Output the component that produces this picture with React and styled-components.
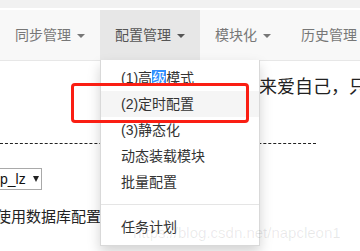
import styled, { createGlobalStyle } from "styled-components";

const GlobalStyle = createGlobalStyle`
  html, body {
    margin: 0;
    padding: 0;
    background: #fff;
    overflow: hidden;
  }
  body {
    font-family: "Liberation Sans", "Noto Sans CJK SC", sans-serif;
    font-size: 14px;
    color: #333;
  }
`;

const Page = styled.div`
  position: relative;
  width: 360px;
  height: 251px;
  overflow: hidden;
  background: #fff;
`;

const TopStrip = styled.div`
  height: 8px;
  background: #f1f1f1;
  border-bottom: 2px solid #fff;
`;

const Navbar = styled.nav`
  position: relative;
  z-index: 2;
  display: flex;
  height: 50px;
  background: #f8f8f8;
  border-bottom: 1px solid #e7e7e7;
`;

const NavItem = styled.div`
  position: relative;
  display: flex;
  align-items: center;
  padding: 0 15px;
  line-height: 20px;
  white-space: nowrap;
  color: ${(p) => (p.$active ? "#555" : "#777")};
  background: ${(p) => (p.$active ? "#e7e7e7" : "transparent")};
`;

const Caret = styled.span`
  display: inline-block;
  width: 0;
  height: 0;
  margin-left: 6px;
  margin-top: 1px;
  border-top: 4px solid;
  border-left: 4px solid transparent;
  border-right: 4px solid transparent;
`;

const Dropdown = styled.ul`
  position: absolute;
  top: 100%;
  left: 0;
  box-sizing: border-box;
  min-width: 160px;
  margin: 0;
  padding: 5px 0;
  list-style: none;
  background: #fff;
  border: 1px solid rgba(0, 0, 0, 0.15);
  border-top: 0;
  box-shadow: 0 6px 12px rgba(0, 0, 0, 0.175);
`;

const MenuItem = styled.li`
  padding: 3px 20px;
  line-height: 20px;
  color: #333;
  background: ${(p) => (p.$hover ? "#f5f5f5" : "transparent")};
`;

const Selected = styled.span`
  background: #3390ff;
  color: #fff;
`;

const Divider = styled.li`
  height: 1px;
  margin: 9px 0;
  background: #e5e5e5;
`;

const Content = styled.main`
  padding-top: 14px;
`;

const Motto = styled.p`
  margin: 0 0 0 259px;
  font-size: 18px;
  line-height: 24px;
  color: #222;
  white-space: nowrap;
`;

const DashedRule = styled.div`
  width: 316px;
  margin-top: 44px;
  border-top: 1px dashed #222;
`;

const SelectBox = styled.div`
  display: flex;
  align-items: center;
  box-sizing: border-box;
  width: 64px;
  height: 22px;
  margin: 24px 0 0 -22px;
  padding-left: 21px;
  border: 1px solid #a9a9a9;
  color: #111;
  font-size: 14px;
`;

const SelectArrow = styled.span`
  width: 0;
  height: 0;
  margin-left: 7px;
  border-top: 6px solid #222;
  border-left: 3.5px solid transparent;
  border-right: 3.5px solid transparent;
`;

const Note = styled.p`
  margin: 17px 0 0 -4px;
  font-size: 15px;
  line-height: 20px;
  color: #222;
  white-space: nowrap;
`;

const Highlight = styled.div`
  position: absolute;
  z-index: 3;
  left: 71px;
  top: 83px;
  box-sizing: border-box;
  width: 178px;
  height: 40px;
  border: 3px solid #fa1e13;
  border-radius: 4px;
`;

const Watermark = styled.div`
  position: absolute;
  z-index: 4;
  left: 133px;
  top: 224px;
  font-size: 15px;
  line-height: 18px;
  color: rgba(0, 0, 0, 0.09);
  white-space: nowrap;
`;

export default function App() {
  return (
    <Page>
      <GlobalStyle />
      <TopStrip />
      <Navbar>
        <NavItem>
          同步管理<Caret />
        </NavItem>
        <NavItem $active>
          配置管理<Caret />
          <Dropdown>
            <MenuItem>
              (1)高<Selected>级</Selected>模式
            </MenuItem>
            <MenuItem $hover>(2)定时配置</MenuItem>
            <MenuItem>(3)静态化</MenuItem>
            <MenuItem>动态装载模块</MenuItem>
            <MenuItem>批量配置</MenuItem>
            <Divider />
            <MenuItem>任务计划</MenuItem>
          </Dropdown>
        </NavItem>
        <NavItem>
          模块化<Caret />
        </NavItem>
        <NavItem>历史管理</NavItem>
      </Navbar>
      <Content>
        <Motto>来爱自己，只</Motto>
        <DashedRule />
        <SelectBox>
          p_lz<SelectArrow />
        </SelectBox>
        <Note>使用数据库配置</Note>
      </Content>
      <Highlight />
      <Watermark>https://blog.csdn.net/napcleon1</Watermark>
    </Page>
  );
}
